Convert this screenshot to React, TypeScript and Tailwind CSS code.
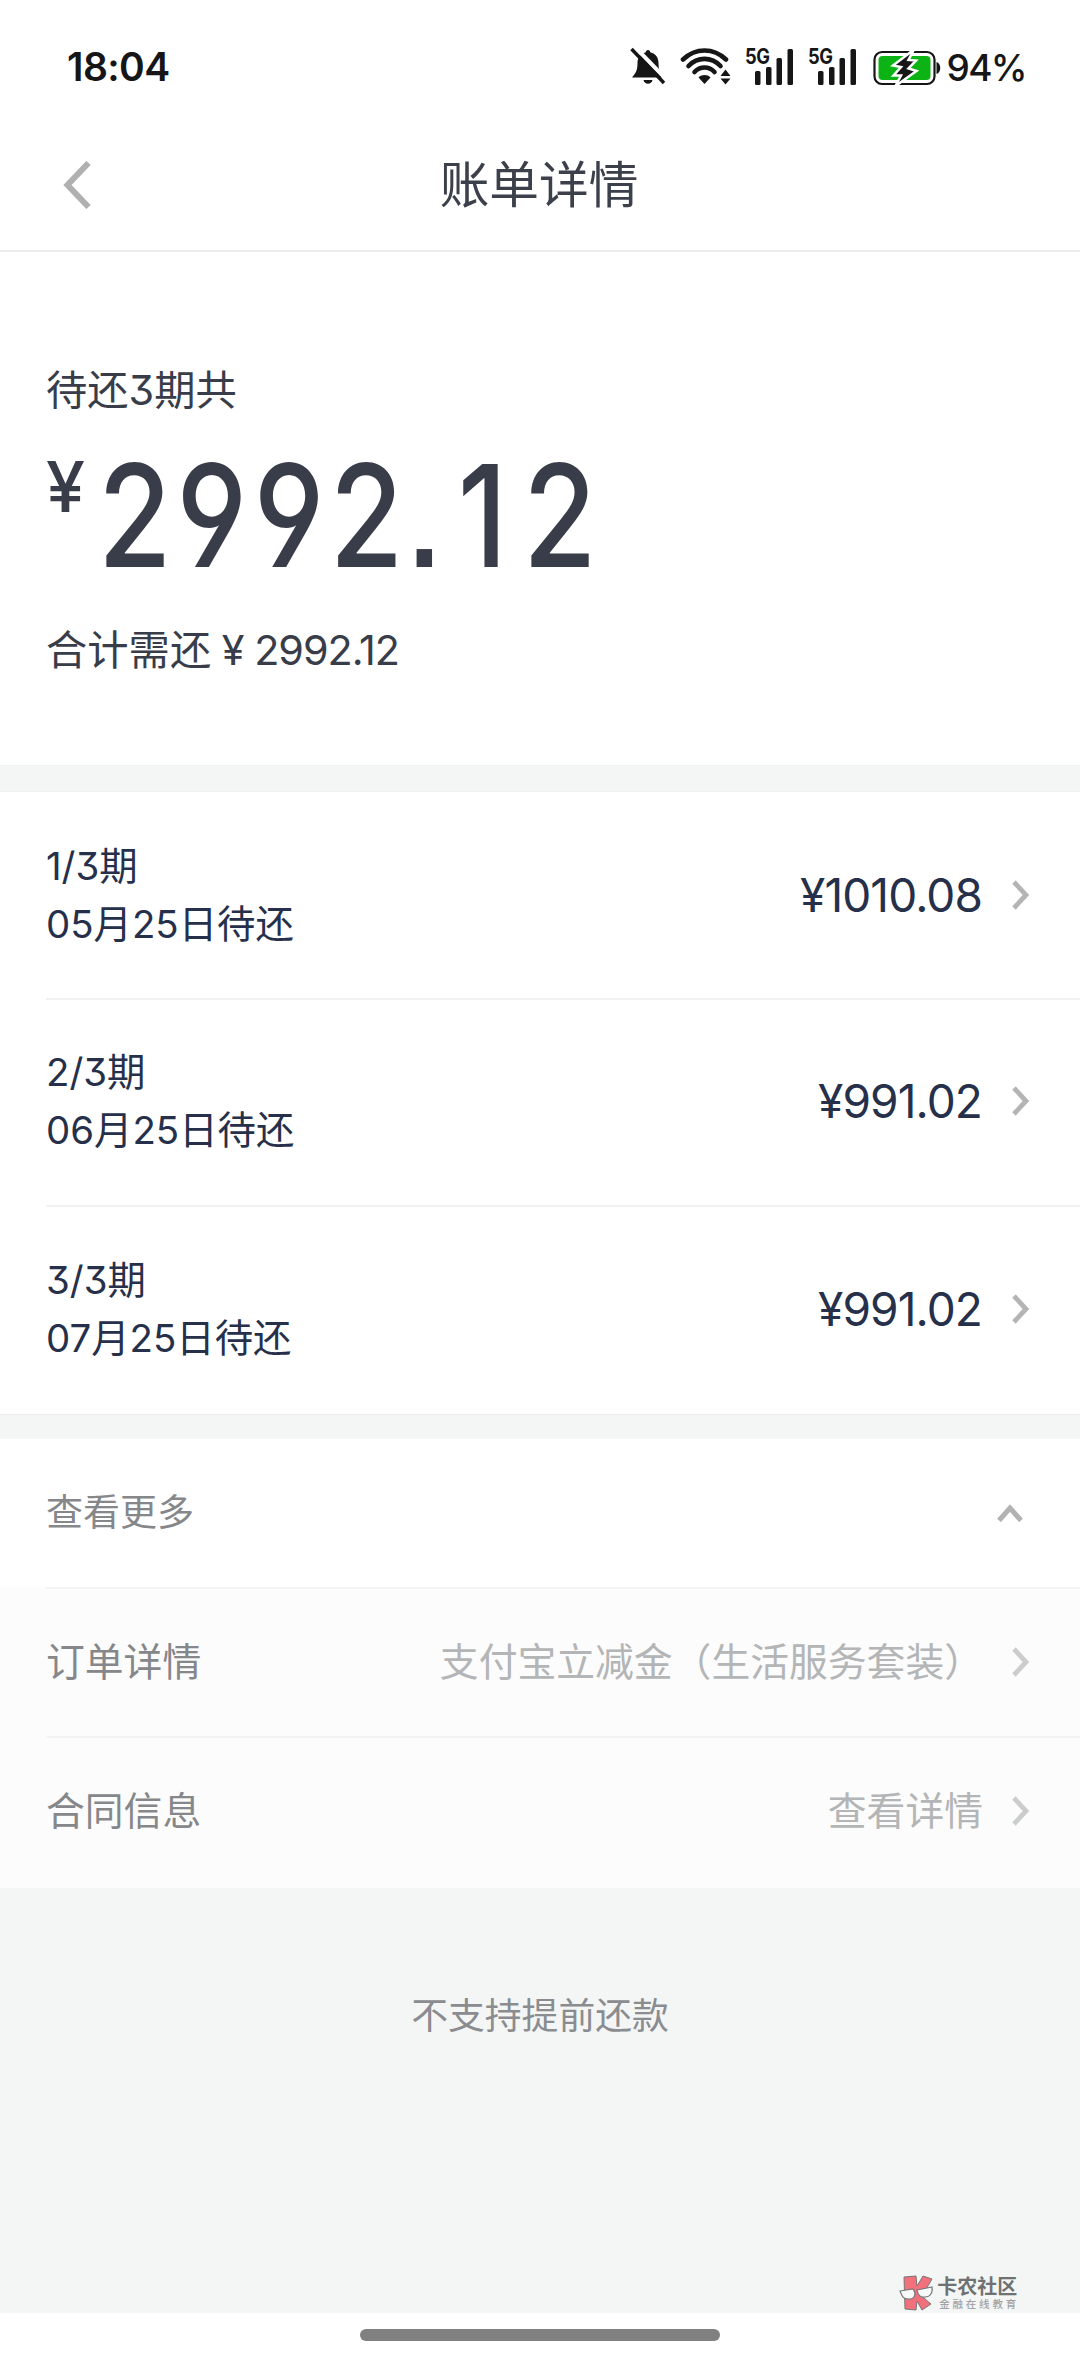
import type { ReactNode } from "react";

const installments = [
  { term: "1/3期", due: "05月25日待还", amount: "¥1010.08" },
  { term: "2/3期", due: "06月25日待还", amount: "¥991.02" },
  { term: "3/3期", due: "07月25日待还", amount: "¥991.02" },
];

function Chevron({ className }: { className: string }) {
  return (
    <svg width="18" height="30" viewBox="0 0 18 30" fill="none" className={className}>
      <path d="M2 2 L14 15 L2 28" stroke="currentColor" strokeWidth="4.800" />
    </svg>
  );
}

function Signal() {
  return (
    <div className="relative h-[38px] w-[49px]">
      <span className="absolute top-0 left-0 origin-left scale-x-[0.85] text-[21.5px] leading-[18px] font-bold tracking-[-0.5px]">5G</span>
      <svg width="49" height="38" viewBox="0 0 49 38" fill="currentColor">
        <rect x="10" y="24" width="5.500" height="14" rx="1.500" />
        <rect x="21" y="20" width="5.500" height="18" rx="1.500" />
        <rect x="31.500" y="11" width="5.500" height="27" rx="1.500" />
        <rect x="42.500" y="2" width="5.500" height="36" rx="1.500" />
      </svg>
    </div>
  );
}

function StatusBar() {
  return (
    <div className="flex h-[120px] items-start justify-between pt-[47px] pr-[54px] pl-[67px] text-[#161616]">
      <span className="text-[39px] leading-[40px] font-semibold tracking-[-0.6px]">18:04</span>
      <div className="flex items-start">
        <svg width="36" height="38" viewBox="0 0 36 38" className="mr-[14px]">
          <path
            d="M18 3 C19.500 3 20 4 20.200 5.200 C26 6.500 28.500 11 28.500 16 C28.500 23 30 26 34 30.500 L2 30.500 C6 26 7.500 23 7.500 16 C7.500 11 10 6.500 15.800 5.200 C16 4 16.500 3 18 3 Z"
            fill="currentColor"
          />
          <path d="M13.500 33 L22.500 33 C21.500 38 14.500 38 13.500 33 Z" fill="currentColor" />
          <path d="M4 -1 L37 33" stroke="#fff" strokeWidth="4" />
          <path d="M1.500 2 L34 36" stroke="currentColor" strokeWidth="3.400" />
        </svg>
        <svg width="52" height="38" viewBox="0 0 52 38" fill="none" className="mr-[13px]">
          <g stroke="currentColor" strokeWidth="4.600" strokeLinecap="round">
            <path d="M3 12.500 C15.500 0.500 33.500 0.500 46 12.500" />
            <path d="M8.500 19 C17.500 9.500 31.500 9.500 40.500 19" />
            <path d="M14.500 25 C20 19 29 19 34.500 25" />
          </g>
          <path d="M18.500 30.500 C22 27.300 27 27.300 30.500 30.500 L24.500 37 Z" fill="currentColor" />
          <path d="M40.500 29 L45.500 22.500 L50.500 29 Z M40.500 31.500 L45.500 37.500 L50.500 31.500 Z" fill="currentColor" />
        </svg>
        <Signal />
        <div className="w-[14px]" />
        <Signal />
        <svg width="69" height="40" viewBox="0 0 69 40" className="ml-[15px]">
          <rect x="2.500" y="5" width="60" height="32" rx="7.500" fill="#fff" stroke="currentColor" strokeWidth="2.200" />
          <rect x="6.500" y="9" width="52" height="24" rx="4" fill="#0cb314" />
          <path d="M64.500 15 C69.500 16 69.500 26 64.500 27 Z" fill="currentColor" />
          <path
            d="M42 2.500 L21 18.500 L29 20 L21.500 28.500 L29 28.500 L23.500 39 L44.500 24 L36.500 21.500 L44 13.500 L36.500 13 Z"
            fill="currentColor"
            stroke="#fff"
            strokeWidth="2.500"
          />
        </svg>
        <span className="ml-[5px] text-[37px] leading-[42px] font-[550] tracking-[-1.6px]">94%</span>
      </div>
    </div>
  );
}

function Header() {
  return (
    <div className="flex h-[132px] items-center border-b-2 border-[#ebebeb] pr-[65px] pl-[63px]">
      <svg width="28" height="48" viewBox="0 0 28 48" fill="none">
        <path d="M25.500 2 L4.500 24 L25.500 46" stroke="#b0b0b0" strokeWidth="6" />
      </svg>
      <h1 className="flex-1 text-center text-[49.7px] leading-[60px] text-[#3b404b]">账单详情</h1>
      <div className="w-[28px]" />
    </div>
  );
}

// condensed amount, one fixed-width cell per digit
function BigAmount({ value }: { value: string }) {
  return (
    <span className="flex origin-left scale-x-[0.84] text-[142px] leading-[190px] font-[550] [font-feature-settings:'cv04','ss07']">
      {value.split("").map((char, i) => (
        <span key={i} className={`flex justify-center ${char === "." ? "w-[46px]" : "w-[92px]"}`}>
          {char}
        </span>
      ))}
    </span>
  );
}

function DetailRow({ label, value, last }: { label: string; value: string; last?: boolean }) {
  return (
    <div className="pl-[46px]">
      <div className={`flex items-center pr-[50px] ${last ? "h-[150px] pb-[4px]" : "h-[149px] border-b-2 border-[#f2f3f3] pb-[2px]"}`}>
        <span className="text-[38.8px] leading-[50px] text-[#85878a]">{label}</span>
        <span className="ml-auto text-[38.8px] leading-[50px] text-[#b3b5b6]">{value}</span>
        <Chevron className="ml-[29px] text-[#cbcccc]" />
      </div>
    </div>
  );
}

function Strip({ children, className }: { children?: ReactNode; className: string }) {
  return <div className={`bg-[#f4f6f6] ${className}`}>{children}</div>;
}

function Watermark() {
  return (
    <div className="flex items-start gap-[3px]">
      <svg width="35" height="36" viewBox="0 0 35 36">
        <path
          d="M5 2 L17 1 L18 11 L24 1 L33 4 L26 16 L20 19 L32 29 L23 35 L18 26 L17 35 L6 34 Z"
          fill="#f2707c"
          stroke="#777"
          strokeWidth="1"
        />
        <g fill="#f8fafa" stroke="#777" strokeWidth="1.200">
          <path d="M1 16 L14 14 C19 21 13 25 9 24 C4 24 3 21 1 16 Z" />
          <path d="M18 15 L33 12 C34 18 31 22 26 22 C21 23 19 20 18 15 Z" />
        </g>
      </svg>
      <div>
        <div className="text-[20px] leading-[24px] font-bold text-[#707272]">卡农社区</div>
        <div className="pl-[2px] text-[10.5px] leading-[12px] font-medium tracking-[2.800px] text-[#a2a4a4]">金融在线教育</div>
      </div>
    </div>
  );
}

export default function App() {
  return (
    <div className="flex h-[2362px] w-[1080px] flex-col bg-white font-['Inter','Noto_Sans_CJK_SC',sans-serif] font-[390] [font-feature-settings:'cv09']">
      <StatusBar />
      <Header />

      <section className="h-[513px] pt-[108px] pl-[46px] text-[#383d49]">
        <p className="text-[41.3px] leading-[60px]">待还3期共</p>
        <div className="flex h-[200px] items-start">
          <span className="w-[50px] text-[70px] leading-[133px] font-medium">¥</span>
          <BigAmount value="2992.12" />
        </div>
        <p className="text-[41.3px] leading-[60px]">
          合计需还<span className="tracking-[-1px]"> ¥ 2992.12</span>
        </p>
      </section>

      <Strip className="h-[27px] border-y border-[#eff0f0]" />

      {installments.map((item, i) => (
        <div key={item.term} className="pl-[46px]">
          <div
            className={`flex items-center pr-[50px] text-[#26304a] ${i === 0 ? "h-[208px] pb-px" : "h-[207px] pb-[3px]"} ${i < 2 ? "border-b-2 border-[#f0f1f1]" : ""}`}
          >
            <div className="text-[38.4px] leading-[58px]">
              <p>{item.term}</p>
              <p>{item.due}</p>
            </div>
            <span className="ml-auto text-[46px] leading-[60px] tracking-[-0.9px]">{item.amount}</span>
            <Chevron className="ml-[30px] text-[#b4b4b4]" />
          </div>
        </div>
      ))}

      <Strip className="h-[25px] border-t border-[#eaebeb]" />

      <div className="flex h-[148px] items-center pr-[57px] pl-[46px]">
        <span className="text-[37px] leading-[50px] text-[#85878a]">查看更多</span>
        <svg width="26" height="18" viewBox="0 0 26 18" fill="none" className="mb-px ml-auto">
          <path d="M2 16.500 L13 4 L24 16.500" stroke="#b2b2b2" strokeWidth="5" />
        </svg>
      </div>

      <div className="bg-[#fcfcfc]">
        <div className="ml-[46px] h-[2px] bg-[#f2f3f3]" />
        <DetailRow label="订单详情" value="支付宝立减金（生活服务套装）" />
        <DetailRow label="合同信息" value="查看详情" last />
      </div>

      <Strip className="flex flex-1 flex-col justify-between pt-[103px] pb-[2px]">
        <p className="text-center text-[36.8px] leading-[50px] text-[#8a8c90]">不支持提前还款</p>
        <div className="flex justify-end pr-[61px]">
          <Watermark />
        </div>
      </Strip>

      <div className="flex h-[49px] justify-center pt-[16px]">
        <div className="h-[12px] w-[360px] rounded-full bg-[#808080]" />
      </div>
    </div>
  );
}
